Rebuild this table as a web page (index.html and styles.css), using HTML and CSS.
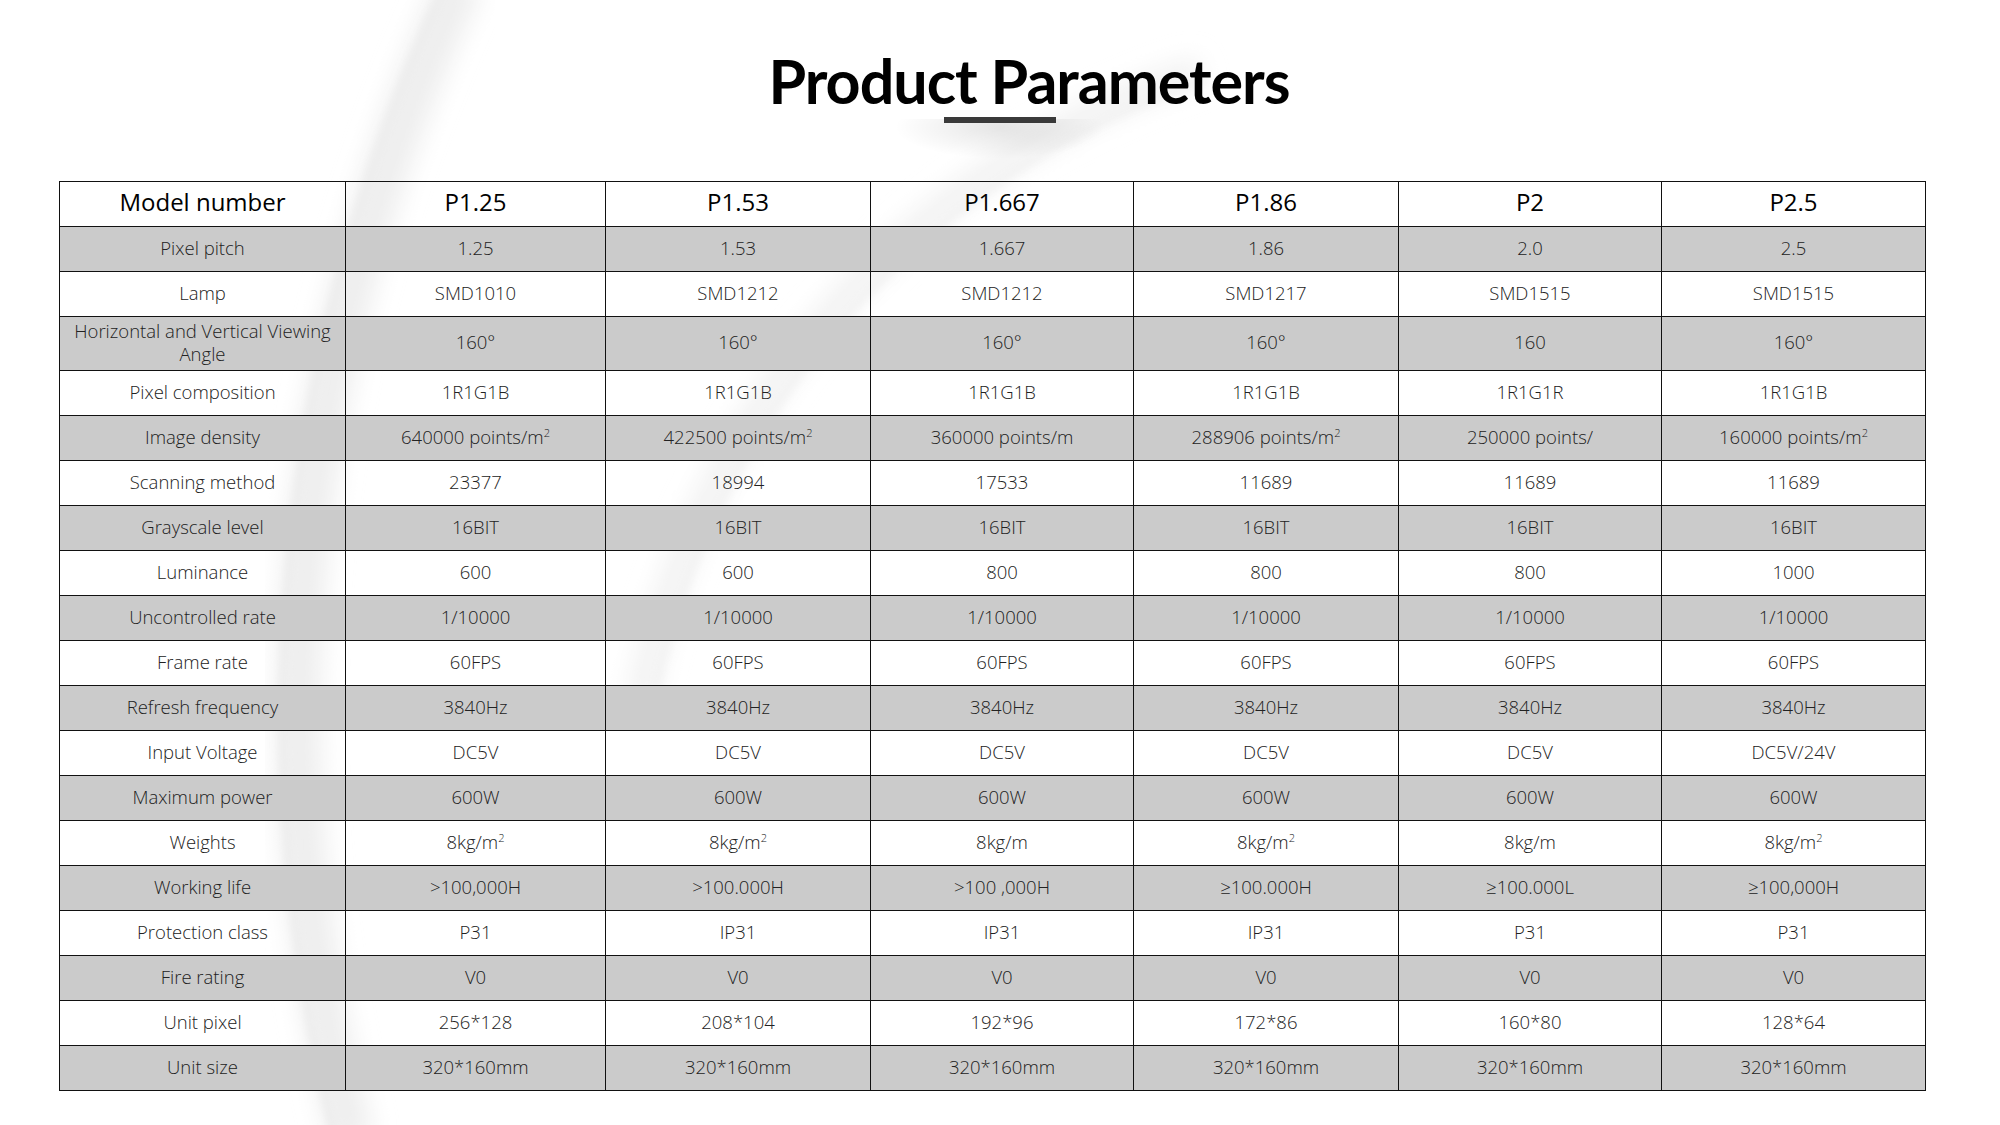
FILE: index.html
```html
<!DOCTYPE html>
<html lang="en">
<head>
<meta charset="utf-8">
<title>Product Parameters</title>
<link rel="stylesheet" href="styles.css">
</head>
<body>
<div class="page">
  <svg class="decor" width="2000" height="1125" viewBox="0 0 2000 1125" aria-hidden="true">
    <defs>
      <filter id="soft" x="-20%" y="-20%" width="140%" height="140%"><feGaussianBlur stdDeviation="12"/></filter>
      <filter id="soft2" x="-20%" y="-20%" width="140%" height="140%"><feGaussianBlur stdDeviation="4"/></filter>
    </defs>
    <path d="M 462 -20 A 1729 1729 0 0 0 352 1140" fill="none" stroke="#eeeeee" stroke-width="44" filter="url(#soft)"/>
    <path d="M 448 -20 A 1729 1729 0 0 0 336 1140" fill="none" stroke="#ebebeb" stroke-width="7" filter="url(#soft2)"/>
    <path d="M 640 700 A 832 832 0 0 1 1200 70" fill="none" stroke="#f2f2f2" stroke-width="28" filter="url(#soft)"/>
    <path d="M 655 690 A 832 832 0 0 1 1205 80" fill="none" stroke="#efefef" stroke-width="5" filter="url(#soft2)"/>
  </svg>

  <header class="head">
    <h1 class="title">Product Parameters</h1>
    <div class="bar"></div>
  </header>

  <table class="params">
    <colgroup>
      <col class="c-label"><col class="c1"><col class="c2"><col class="c3"><col class="c4"><col class="c5"><col class="c6">
    </colgroup>
    <thead>
      <tr><th>Model number</th><th>P1.25</th><th>P1.53</th><th>P1.667</th><th>P1.86</th><th>P2</th><th>P2.5</th></tr>
    </thead>
    <tbody>
      <tr><td>Pixel pitch</td><td>1.25</td><td>1.53</td><td>1.667</td><td>1.86</td><td>2.0</td><td>2.5</td></tr>
      <tr><td>Lamp</td><td>SMD1010</td><td>SMD1212</td><td>SMD1212</td><td>SMD1217</td><td>SMD1515</td><td>SMD1515</td></tr>
      <tr class="tall"><td>Horizontal and Vertical Viewing Angle</td><td>160°</td><td>160°</td><td>160°</td><td>160°</td><td>160</td><td>160°</td></tr>
      <tr><td>Pixel composition</td><td>1R1G1B</td><td>1R1G1B</td><td>1R1G1B</td><td>1R1G1B</td><td>1R1G1R</td><td>1R1G1B</td></tr>
      <tr><td>Image density</td><td>640000 points/m<sup>2</sup></td><td>422500 points/m<sup>2</sup></td><td>360000 points/m</td><td>288906 points/m<sup>2</sup></td><td>250000 points/</td><td>160000 points/m<sup>2</sup></td></tr>
      <tr><td>Scanning method</td><td>23377</td><td>18994</td><td>17533</td><td>11689</td><td>11689</td><td>11689</td></tr>
      <tr><td>Grayscale level</td><td>16BIT</td><td>16BIT</td><td>16BIT</td><td>16BIT</td><td>16BIT</td><td>16BIT</td></tr>
      <tr><td>Luminance</td><td>600</td><td>600</td><td>800</td><td>800</td><td>800</td><td>1000</td></tr>
      <tr><td>Uncontrolled rate</td><td>1/10000</td><td>1/10000</td><td>1/10000</td><td>1/10000</td><td>1/10000</td><td>1/10000</td></tr>
      <tr><td>Frame rate</td><td>60FPS</td><td>60FPS</td><td>60FPS</td><td>60FPS</td><td>60FPS</td><td>60FPS</td></tr>
      <tr><td>Refresh frequency</td><td>3840Hz</td><td>3840Hz</td><td>3840Hz</td><td>3840Hz</td><td>3840Hz</td><td>3840Hz</td></tr>
      <tr><td>Input Voltage</td><td>DC5V</td><td>DC5V</td><td>DC5V</td><td>DC5V</td><td>DC5V</td><td>DC5V/24V</td></tr>
      <tr><td>Maximum power</td><td>600W</td><td>600W</td><td>600W</td><td>600W</td><td>600W</td><td>600W</td></tr>
      <tr><td>Weights</td><td>8kg/m<sup>2</sup></td><td>8kg/m<sup>2</sup></td><td>8kg/m</td><td>8kg/m<sup>2</sup></td><td>8kg/m</td><td>8kg/m<sup>2</sup></td></tr>
      <tr><td>Working life</td><td>&gt;100,000H</td><td>&gt;100.000H</td><td>&gt;100 ,000H</td><td>≥100.000H</td><td>≥100.000L</td><td>≥100,000H</td></tr>
      <tr><td>Protection class</td><td>P31</td><td>IP31</td><td>IP31</td><td>IP31</td><td>P31</td><td>P31</td></tr>
      <tr><td>Fire rating</td><td>V0</td><td>V0</td><td>V0</td><td>V0</td><td>V0</td><td>V0</td></tr>
      <tr><td>Unit pixel</td><td>256*128</td><td>208*104</td><td>192*96</td><td>172*86</td><td>160*80</td><td>128*64</td></tr>
      <tr><td>Unit size</td><td>320*160mm</td><td>320*160mm</td><td>320*160mm</td><td>320*160mm</td><td>320*160mm</td><td>320*160mm</td></tr>
    </tbody>
  </table>
</div>
</body>
</html>
```

FILE: styles.css
```css
html, body {
  margin: 0;
  padding: 0;
  background: #ffffff;
}

.page {
  position: relative;
  width: 2000px;
  height: 1125px;
  overflow: hidden;
  font-family: "Open Sans", "Liberation Sans", sans-serif;
}

.decor {
  position: absolute;
  left: 0;
  top: 0;
  z-index: 0;
}

.head {
  position: relative;
  z-index: 1;
  padding-top: 43px;
}

.title {
  margin: 0;
  padding-left: 58px;
  text-align: center;
  font-family: "Lato", "Liberation Sans", sans-serif;
  font-weight: 700;
  font-size: 61px;
  line-height: 76px;
  letter-spacing: -1px;
  color: #000000;
}

.bar {
  position: relative;
  width: 112px;
  height: 6px;
  margin: -2px auto 0;
  background: #3a3a3a;
}

.bar::after {
  content: "";
  position: absolute;
  left: -50px;
  right: -50px;
  top: 2px;
  height: 40px;
  background: radial-gradient(ellipse at 50% 20%, rgba(0,0,0,0.10), rgba(0,0,0,0) 70%);
  z-index: -1;
}

.params {
  position: relative;
  z-index: 1;
  margin: 58px 0 0 59px;
  width: 1866px;
  table-layout: fixed;
  border-collapse: collapse;
  color: #222222;
}

.c-label { width: 286px; }
.c1 { width: 260px; }
.c2 { width: 265px; }
.c3 { width: 263px; }
.c4 { width: 265px; }
.c5 { width: 263px; }
.c6 { width: 264px; }

.params th,
.params td {
  border: 1px solid #111111;
  text-align: center;
  vertical-align: middle;
  padding: 0 6px 3px;
}

.params th {
  height: 38.5px;
  padding-bottom: 5px;
  font-weight: 400;
  font-size: 24px;
  color: #000000;
}

.params td {
  height: 41px;
  font-weight: 300;
  font-size: 18.5px;
  line-height: 23px;
}

.params tr.tall td {
  height: 50.5px;
}

.params tbody tr:nth-child(odd) td {
  background: #cbcbcb;
}

.params sup {
  font-size: 0.6em;
  line-height: 0;
  vertical-align: 0.6em;
}
```
